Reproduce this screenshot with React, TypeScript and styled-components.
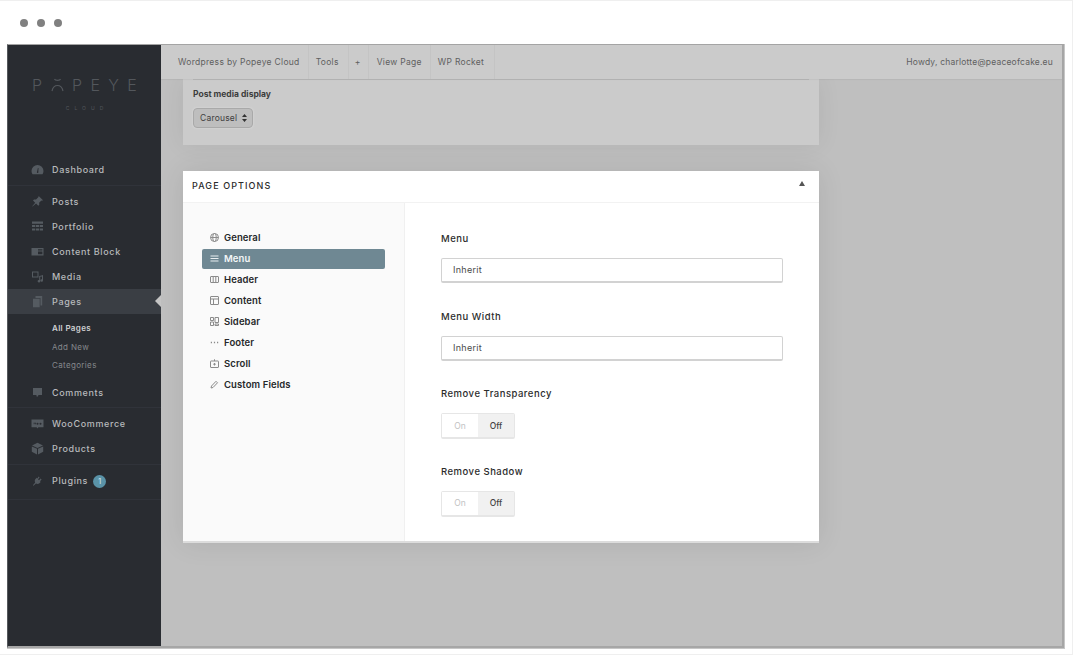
import React from "react";
import styled, { createGlobalStyle } from "styled-components";

const GlobalStyle = createGlobalStyle`
  html, body {
    margin: 0;
    padding: 0;
    background: #fff;
  }
  * {
    box-sizing: border-box;
  }
`;

const Page = styled.div`
  width: 1073px;
  height: 655px;
  overflow: hidden;
  background: #fff;
  border: 1px solid #efefef;
  border-left: 0;
  padding-left: 7px;
  font-family: Inter, "Open Sans", sans-serif;
`;

const TitleBar = styled.div`
  height: 43px;
  display: flex;
  align-items: center;
  gap: 9px;
  padding: 0 0 0 13px;
`;

const Dot = styled.span`
  width: 8px;
  height: 8px;
  border-radius: 50%;
  background: #808080;
`;

const Window = styled.div`
  width: 1057px;
  height: 604px;
  display: flex;
  border-top: 1px solid #a4a4a4;
  border-left: 1px solid #55585c;
  border-bottom: 2px solid #a6a6a6;
  border-right: 2px solid #a6a6a6;
  outline: 1px solid #c6c6c6;
  clip-path: inset(0 -1px -1px 0);
`;

const Sidebar = styled.aside`
  width: 153px;
  flex: none;
  background: #292c31;
`;

const Logo = styled.div`
  height: 110px;
  padding-top: 31px;
  display: flex;
  flex-direction: column;
  align-items: center;
  color: #53575c;
`;

const LogoMark = styled.div`
  display: flex;
  align-items: center;
  gap: 8.400px;
  height: 18px;
  font-size: 16px;
  font-weight: 300;
  line-height: 18px;
`;

const LogoSub = styled.div`
  margin-top: 10px;
  font-size: 5px;
  letter-spacing: 5px;
  line-height: 8px;
  padding-left: 5px;
`;

const MenuGroup = styled.div<{ $pad: string }>`
  padding: ${(p) => p.$pad};
  border-bottom: 1px solid #30333a;
`;

const MenuItem = styled.div<{ $active?: boolean }>`
  position: relative;
  height: 25px;
  display: flex;
  align-items: center;
  gap: 8px;
  padding-left: 23px;
  font-size: 9px;
  font-weight: 500;
  letter-spacing: 0.65px;
  color: #b8babc;
  background: ${(p) => (p.$active ? "#3a3e44" : "transparent")};
`;

const MenuIcon = styled.svg`
  width: 13px;
  height: 13px;
  flex: none;
  fill: #555b61;
`;

const Arrow = styled.span`
  position: absolute;
  right: 0;
  top: 6px;
  border: 6px solid transparent;
  border-left: 0;
  border-right: 6px solid #c4c4c4;
`;

const Badge = styled.span`
  width: 13px;
  height: 13px;
  margin: 3px 0 0 -3px;
  border-radius: 50%;
  background: #5a93a8;
  color: #cfe0e6;
  font-size: 7px;
  line-height: 13px;
  text-align: center;
  letter-spacing: 0;
`;

const SubMenu = styled.div`
  padding: 5px 0 5px 44px;
`;

const SubItem = styled.div<{ $current?: boolean }>`
  height: 18.500px;
  line-height: 18.500px;
  font-size: 8px;
  letter-spacing: 0.35px;
  font-weight: ${(p) => (p.$current ? 600 : 400)};
  color: ${(p) => (p.$current ? "#d0d1d3" : "#85888c")};
`;

const Main = styled.main`
  flex: 1;
  min-width: 0;
  background: #bfbfbf;
`;

const TopBar = styled.div`
  position: relative;
  z-index: 1;
  height: 34px;
  display: flex;
  align-items: stretch;
  background: #cbcbcb;
  box-shadow: 0 1px 1px rgba(0, 0, 0, 0.04);
  font-size: 8.500px;
  letter-spacing: 0.3px;
  color: #5f5f5f;
`;

const TopLink = styled.div<{ $left: number; $right: number }>`
  display: flex;
  align-items: center;
  padding: 0 ${(p) => p.$right}px 0 ${(p) => p.$left}px;
  border-right: 1px solid #c4c4c4;
`;

const Howdy = styled.div`
  margin-left: auto;
  padding-right: 9px;
  align-self: center;
  letter-spacing: 0.2px;
`;

const Content = styled.div`
  padding-left: 22px;
`;

const PostCard = styled.section`
  width: 636px;
  height: 66px;
  padding: 0 10px;
  background: #cbcbcb;
  box-shadow: 0 0 24px rgba(0, 0, 0, 0.07);
`;

const PostRule = styled.div`
  height: 1px;
  margin-bottom: 9px;
  background: #b9b9b9;
`;

const PostLabel = styled.div`
  font-size: 8.500px;
  font-weight: 700;
  line-height: 11px;
  color: #3d3d3d;
`;

const FakeSelect = styled.div`
  width: 60px;
  height: 20px;
  margin-top: 8px;
  display: flex;
  align-items: center;
  justify-content: space-between;
  padding: 0 5px 0 6px;
  border: 1px solid #a9a9a9;
  border-radius: 4px;
  background: #bebebe;
  box-shadow: 0 0 2px #e0e0e0;
  font-size: 8.500px;
  letter-spacing: 0.2px;
  color: #404040;
`;

const Updown = styled.svg`
  width: 5px;
  height: 8px;
  fill: #333;
`;

const OptionsCard = styled.section`
  width: 636px;
  height: 372px;
  margin-top: 26px;
  background: #fff;
  border-bottom: 2px solid #dcdcdc;
  box-shadow: 0 0 26px rgba(0, 0, 0, 0.09);
`;

const CardHeader = styled.header`
  height: 32px;
  display: flex;
  align-items: center;
  justify-content: space-between;
  padding: 0 14px 3px 9px;
  border-bottom: 1px solid #f2f2f2;
  font-size: 9px;
  font-weight: 500;
  letter-spacing: 1.100px;
  color: #2b2b2b;
`;

const Caret = styled.span`
  border: 3.500px solid transparent;
  border-top: 0;
  border-bottom: 5px solid #555;
  margin-bottom: 3px;
`;

const CardBody = styled.div`
  display: flex;
  height: 338px;
`;

const OptionNav = styled.nav`
  width: 222px;
  padding: 24px 19px 0 19px;
  background: #fafafa;
  border-right: 1px solid #f0f0f0;
`;

const NavRow = styled.div<{ $active?: boolean }>`
  height: ${(p) => (p.$active ? 20 : 21)}px;
  margin-top: ${(p) => (p.$active ? 1 : 0)}px;
  padding: ${(p) => (p.$active ? "0 0 2px 8px" : "0 0 0 8px")};
  display: flex;
  align-items: center;
  gap: 5px;
  border-radius: 2px;
  font-size: 9.500px;
  font-weight: 600;
  letter-spacing: 0.1px;
  color: ${(p) => (p.$active ? "#f3f6f7" : "#26282a")};
  background: ${(p) => (p.$active ? "#6f8893" : "transparent")};
`;

const NavIcon = styled.svg<{ $active?: boolean }>`
  width: 9px;
  height: 9px;
  flex: none;
  fill: none;
  stroke: ${(p) => (p.$active ? "#e8eef0" : "#8b8b8b")};
  stroke-width: 1;
`;

const Form = styled.div`
  flex: 1;
  padding: 29px 0 0 36px;
`;

const Field = styled.div`
  height: 77.500px;
`;

const FieldLabel = styled.div`
  height: 14px;
  margin-bottom: 12px;
  font-size: 9.500px;
  line-height: 14px;
  font-weight: 500;
  letter-spacing: 0.5px;
  color: #2c2c2c;
`;

const TextBox = styled.div`
  width: 342px;
  height: 25px;
  padding: 0 11px;
  border: 1px solid #d2d2d2;
  border-bottom-width: 2px;
  border-radius: 2px;
  font-size: 9px;
  line-height: 22px;
  letter-spacing: 0.3px;
  color: #4a4a4a;
`;

const Toggle = styled.div`
  width: 74px;
  height: 26px;
  display: flex;
  border: 1px solid #e6e6e6;
  border-bottom-width: 2px;
  border-radius: 2px;
`;

const ToggleOption = styled.span<{ $on?: boolean }>`
  flex: 1;
  display: flex;
  align-items: center;
  justify-content: center;
  font-size: 8.500px;
  font-weight: ${(p) => (p.$on ? 500 : 400)};
  color: ${(p) => (p.$on ? "#444" : "#c2c2c2")};
  background: ${(p) => (p.$on ? "#f1f1f1" : "#fff")};
`;

const sideIcons: Record<string, React.ReactNode> = {
  gauge: <path d="M6.500 2a6 6 0 0 0-6 6c0 1.300.4 2.400 1 3.200h10c.6-.8 1-1.900 1-3.200a6 6 0 0 0-6-6Zm-.6 7.300 1-4.300.6.1-.2 4.300a.7.7 0 1 1-1.400-.1Z" fillRule="evenodd" />,
  pin: <path d="M8.200 1.500 12 5.200l-1 .6-.6-.3-2.300 2.300.2 2-1 1-2.200-2.200-3.600 3-.3-.3 3-3.600L2 5.400l1-1 2 .2 2.300-2.300-.2-.7Z" />,
  table: <path d="M1 1.500h11v2.200H1Zm0 3.400h3.300v2H1Zm4 0h3v2H5Zm3.700 0H12v2H8.700ZM1 8.400h3.300v2H1Zm4 0h3v2H5Zm3.700 0H12v2H8.700Z" />,
  block: <path d="M.5 3h12v7.500H.5ZM7 4.200v1.200h4.400V4.200Zm0 2.400v2.600h4.400V6.600Z" fillRule="evenodd" />,
  media: <path d="M1 1.500h6.500v6H1Zm1 1v4h4.500v-4Zm8.500 3 1.500-.4v5.400a1.300 1.300 0 1 1-1-1.200V6.400l-1.800.4v4.400a1.300 1.300 0 1 1-1-1.200V6Z" fillRule="evenodd" />,
  pages: <path d="M4.500 1h6.700v9.500H9.500V3H4.500ZM2 3.700h6.700V12.200H2Z" />,
  comment: <path d="M2 2h9v7H7.600L6 11.200 5.300 9H2Z" />,
  woo: <path d="M.5 2.500h12v7.700H7.400L6.500 11.500l-.9-1.300H.5Zm2 3.200.5 2 .7-1.600.7 1.600.6-2Zm4 0a1 1 0 1 0 0 2 1 1 0 0 0 0-2Zm3 0a1 1 0 1 0 0 2 1 1 0 0 0 0-2Z" fillRule="evenodd" />,
  box: <path d="M6.500.8 12 3.400 6.500 6 1 3.400ZM.8 4.400l5.200 2.400V12.400L.8 9.800Zm11.400 0v5.400L7 12.400V6.800Z" />,
  plug: <path d="M7.500 2.500 8.600 3.600 7 5.200l1 1 1.600-1.600 1 1L9 7.200l.7.7-1.300 1.300c-1 1-2.400 1-3.400.3l-2.500 2.300-.6-.6L4.200 8.400c-.7-1-.6-2.400.3-3.400l1.300-1.300.7.7Z" />,
};

const SideIcon = ({ name }: { name: string }) => (
  <MenuIcon viewBox="0 0 13 13">{sideIcons[name]}</MenuIcon>
);

const navIcons: Record<string, React.ReactNode> = {
  General: (
    <>
      <circle cx="4.500" cy="4.500" r="4" />
      <ellipse cx="4.500" cy="4.500" rx="1.800" ry="4" />
      <path d="M.5 4.500h8" />
    </>
  ),
  Menu: <path d="M.5 2h8M.5 4.500h8M.5 7h8" />,
  Header: <path d="M1 1.500h7a.5.5 0 0 1 .5.5v5a.5.5 0 0 1-.5.5H1a.5.5 0 0 1-.5-.5V2a.5.5 0 0 1 .5-.5ZM3.200 1.500v6M5.800 1.500v6" />,
  Content: <path d="M1 .5h7a.5.5 0 0 1 .5.5v7a.5.5 0 0 1-.5.5H1a.5.5 0 0 1-.5-.5V1A.5.5 0 0 1 1 .5ZM.5 3h8M3.500 3v5.500" />,
  Sidebar: <path d="M.5.5h3v3h-3ZM5 .5h3.500v5H5ZM.5 5h3v3.500h-3ZM5 7h3.500v1.500H5Z" />,
  Footer: <path d="M.8 4.500h1.200M3.900 4.500h1.200M7 4.500h1.200" strokeWidth="1.400" />,
  Scroll: <path d="M1 2h7a.5.5 0 0 1 .5.5V8a.5.5 0 0 1-.5.5H1A.5.5 0 0 1 .5 8V2.500A.5.5 0 0 1 1 2ZM4.500.3v1.700M4.500 4v2.500M3.200 5.200h2.600" />,
  "Custom Fields": <path d="M1 8l.5-2 4.500-4.700 1.500 1.500L3 7.500Z" />,
};

const options = ["General", "Menu", "Header", "Content", "Sidebar", "Footer", "Scroll", "Custom Fields"];

export default function App() {
  return (
    <>
      <GlobalStyle />
      <Page>
        <TitleBar>
          <Dot />
          <Dot />
          <Dot />
        </TitleBar>
        <Window>
          <Sidebar>
            <Logo>
              <LogoMark>
                <span>P</span>
                <svg width="13" height="14" viewBox="0 0 13 14" fill="none" stroke="#53575c" strokeWidth="1.200">
                  <path d="M3.500 1c.6 1.800 5.400 1.800 6 0M1 13c.8-3.600 3-5.500 5.500-5.500S11.200 9.400 12 13" />
                </svg>
                <span>P</span>
                <span>E</span>
                <span>Y</span>
                <span>E</span>
              </LogoMark>
              <LogoSub>CLOUD</LogoSub>
            </Logo>
            <MenuGroup $pad="2px 0 3px">
              <MenuItem>
                <SideIcon name="gauge" />
                Dashboard
              </MenuItem>
            </MenuGroup>
            <MenuGroup $pad="3px 0 2px">
              <MenuItem>
                <SideIcon name="pin" />
                Posts
              </MenuItem>
              <MenuItem>
                <SideIcon name="table" />
                Portfolio
              </MenuItem>
              <MenuItem>
                <SideIcon name="block" />
                Content Block
              </MenuItem>
              <MenuItem>
                <SideIcon name="media" />
                Media
              </MenuItem>
              <MenuItem $active>
                <SideIcon name="pages" />
                Pages
                <Arrow />
              </MenuItem>
              <SubMenu>
                <SubItem $current>All Pages</SubItem>
                <SubItem>Add New</SubItem>
                <SubItem>Categories</SubItem>
              </SubMenu>
              <MenuItem>
                <SideIcon name="comment" />
                Comments
              </MenuItem>
            </MenuGroup>
            <MenuGroup $pad="3px 0 3px">
              <MenuItem>
                <SideIcon name="woo" />
                WooCommerce
              </MenuItem>
              <MenuItem>
                <SideIcon name="box" />
                Products
              </MenuItem>
            </MenuGroup>
            <MenuGroup $pad="3px 0 6px">
              <MenuItem>
                <SideIcon name="plug" />
                Plugins
                <Badge>1</Badge>
              </MenuItem>
            </MenuGroup>
          </Sidebar>
          <Main>
            <TopBar>
              <TopLink $left={17} $right={8}>Wordpress by Popeye Cloud</TopLink>
              <TopLink $left={7} $right={9}>Tools</TopLink>
              <TopLink $left={6} $right={7}>+</TopLink>
              <TopLink $left={8} $right={8}>View Page</TopLink>
              <TopLink $left={7} $right={10}>WP Rocket</TopLink>
              <Howdy>Howdy, charlotte@peaceofcake.eu</Howdy>
            </TopBar>
            <Content>
              <PostCard>
                <PostRule />
                <PostLabel>Post media display</PostLabel>
                <FakeSelect>
                  Carousel
                  <Updown viewBox="0 0 5 8">
                    <path d="M2.500 0 5 3H0ZM0 5h5L2.500 8Z" />
                  </Updown>
                </FakeSelect>
              </PostCard>
              <OptionsCard>
                <CardHeader>
                  PAGE OPTIONS
                  <Caret />
                </CardHeader>
                <CardBody>
                  <OptionNav>
                    {options.map((name) => (
                      <NavRow key={name} $active={name === "Menu"}>
                        <NavIcon viewBox="0 0 9 9" $active={name === "Menu"}>
                          {navIcons[name]}
                        </NavIcon>
                        {name}
                      </NavRow>
                    ))}
                  </OptionNav>
                  <Form>
                    <Field>
                      <FieldLabel>Menu</FieldLabel>
                      <TextBox>Inherit</TextBox>
                    </Field>
                    <Field>
                      <FieldLabel>Menu Width</FieldLabel>
                      <TextBox>Inherit</TextBox>
                    </Field>
                    <Field>
                      <FieldLabel>Remove Transparency</FieldLabel>
                      <Toggle>
                        <ToggleOption>On</ToggleOption>
                        <ToggleOption $on>Off</ToggleOption>
                      </Toggle>
                    </Field>
                    <Field>
                      <FieldLabel>Remove Shadow</FieldLabel>
                      <Toggle>
                        <ToggleOption>On</ToggleOption>
                        <ToggleOption $on>Off</ToggleOption>
                      </Toggle>
                    </Field>
                  </Form>
                </CardBody>
              </OptionsCard>
            </Content>
          </Main>
        </Window>
      </Page>
    </>
  );
}
